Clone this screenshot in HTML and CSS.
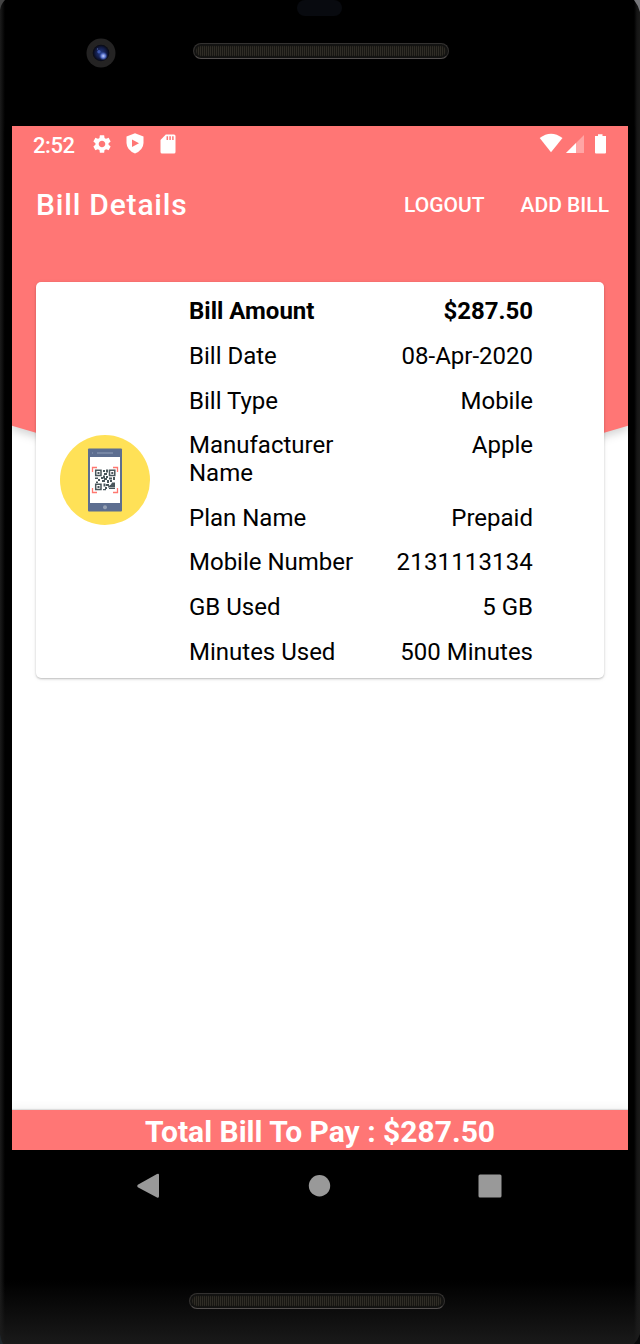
FILE: index.html
```
<!DOCTYPE html>
<html lang="en">
<head>
<meta charset="utf-8">
<title>Bill Details</title>
<link rel="stylesheet" href="styles.css">
</head>
<body>
<div class="phone">
  <svg class="corners" width="640" height="1344" viewBox="0 0 640 1344">
    <path d="M0 0H5Q1 4 0 10Z" fill="#444"/>
    <path d="M634 0H640V12Q638 5 634 0Z" fill="#77777b"/>
    <path d="M0 1334Q1 1340 3 1344H0Z" fill="#20282d"/>
    <path d="M640 1334Q638 1340 634 1344H640Z" fill="#08090a"/>
  </svg>
  <div class="bezel-top">
    <div class="sensor"></div>
    <div class="hardware">
      <svg class="camera" width="30" height="30" viewBox="0 0 30 30">
        <defs>
          <radialGradient id="lens"><stop offset="0" stop-color="#263d87"/><stop offset=".65" stop-color="#121b45"/><stop offset="1" stop-color="#07080f"/></radialGradient>
          <radialGradient id="glint"><stop offset="0" stop-color="#c4d2ff"/><stop offset=".5" stop-color="#5a73cc"/><stop offset="1" stop-color="#263d87" stop-opacity="0"/></radialGradient>
        </defs>
        <circle cx="15" cy="15" r="14.5" fill="#242323"/>
        <circle cx="15" cy="15" r="8.3" fill="url(#lens)"/>
        <circle cx="17.3" cy="18" r="4.5" fill="url(#glint)"/>
        <circle cx="13" cy="13.8" r="1.7" fill="#3e58ae"/>
        <circle cx="11.5" cy="11" r=".7" fill="#4c61a4"/>
      </svg>
      <div class="speaker"></div>
    </div>
  </div>
  <div class="screen">
    <svg class="backdrop" width="616" height="400" viewBox="0 0 616 400">
      <path d="M0 0H616V299.700L308 390L0 299.700Z" fill="#ff7675"/>
    </svg>
    <div class="status">
      <span class="clock">2:52</span>
      <svg class="icon-gear" width="22" height="22" viewBox="0 0 24 24" fill="#fff"><path d="M19.140 12.940c.04-.3.060-.61.060-.94 0-.32-.02-.64-.07-.94l2.030-1.580c.18-.14.23-.41.120-.61l-1.920-3.320c-.12-.22-.37-.29-.59-.22l-2.390.96c-.5-.38-1.030-.7-1.620-.94l-.36-2.540c-.04-.24-.24-.41-.48-.41h-3.840c-.24 0-.43.170-.47.410l-.36 2.540c-.59.240-1.130.570-1.620.940l-2.390-.96c-.22-.08-.47 0-.59.220L2.740 8.870c-.12.210-.08.470.120.610l2.030 1.580c-.05.3-.09.630-.09.940s.02.640.070.940l-2.030 1.580c-.18.140-.23.410-.12.610l1.920 3.320c.12.220.37.290.59.220l2.390-.96c.5.380 1.030.7 1.620.94l.36 2.540c.05.240.24.410.48.410h3.840c.24 0 .44-.17.470-.41l.36-2.540c.59-.24 1.130-.56 1.620-.94l2.390.96c.22.080.47 0 .59-.22l1.920-3.320c.12-.22.070-.47-.12-.61l-2.010-1.580zM12 15.600c-1.980 0-3.600-1.620-3.600-3.600s1.620-3.600 3.600-3.600 3.600 1.620 3.600 3.600-1.620 3.600-3.600 3.600z"/></svg>
      <svg class="icon-shield" width="18" height="21" viewBox="0 0 18 21"><path d="M9 .3L17.500 3.500V10Q17.300 17 9 20.500Q.7 17 .5 10V3.500Z" fill="#fff"/><path d="M6 6.500V14L13 10.200Z" fill="#ff7675"/></svg>
      <svg class="icon-sd" width="16" height="20" viewBox="0 0 16 20"><path d="M5.800.5H14Q15.500.5 15.500 2V18Q15.500 19.500 14 19.500H2Q.5 19.500.5 18V6Z" fill="#fff"/><path d="M7.300 2.300V6M10.100 2.300V6M12.900 2.300V6" stroke="#ff7675" stroke-width="1.500"/></svg>
      <svg class="icon-signal" width="70" height="22" viewBox="0 0 70 22" fill="#fff">
        <path d="M.7 5Q12-3.700 23.500 5L12 19.300Z"/>
        <path d="M45 2V20H27Z" opacity=".35"/>
        <path d="M37 10V20H27Z"/>
        <path d="M59 1.200H63.500V3H67V19.500Q67 20.500 66 20.500H57Q56 20.500 56 19.500V3H59Z"/>
      </svg>
    </div>
    <header class="appbar">
      <h1 class="title">Bill Details</h1>
      <span class="action">LOGOUT</span>
      <span class="action">ADD BILL</span>
    </header>
    <main class="card">
      <svg class="qr" width="90" height="90" viewBox="0 0 90 90">
        <circle cx="45" cy="45" r="45" fill="#ffe157"/>
        <rect x="28" y="13.500" width="34" height="63" rx="1" fill="#5d6e90"/>
        <rect x="30" y="22" width="30" height="46" fill="#fff"/>
        <path d="M37 18H53" stroke="#8190ac" stroke-width="1.500"/><circle cx="32.500" cy="18" r=".7" fill="#8190ac"/>
        <circle cx="45" cy="72.300" r="2" fill="#95a0b4"/>
        <path d="M37 32.500H32.500V37M53 32.500H57.500V37M32.500 53V57.500H37M57.500 53V57.500H53" fill="none" stroke="#ff7770" stroke-width="1.300"/>
        <g fill="none" stroke="#49565b" stroke-width="1.500"><path d="M35.700 35.200H41V40.500H35.700ZM49.500 35.200H54.800V40.500H49.500ZM35.700 49.200H41V54.500H35.700Z"/></g>
        <path fill="#49565b" d="M37.500 37h2v2h-2zM51.300 37h2v2h-2zM37.500 51h2v2h-2zM43 35h2v2h-2zM46 34.500h2v3h-2zM44 38h3v2h-3zM43 40.500h2v3h-2zM46 41h2v2h-2zM35 42.500h3v1.500h-3zM38 44h2v2h-2zM41 42h2v2h-2zM42 45h3v2h-3zM36 46.500h2v1.500h-2zM44 43h3v2h-3zM49 42.500h3v2h-3zM53 42h2v3h-2zM47 45h2v3h-2zM50 45h2v2h-2zM43.500 48.500h2v3h-2zM46 49h3v2h-3zM45 52h2v2h-2zM43 54h3v1.300h-3zM48 51.500l3-2 1-2h3v5h-7zM49 53h6v1h-6z"/>
      </svg>
      <div class="details">
        <div class="row strong"><span class="label">Bill Amount</span><span>$287.50</span></div>
        <div class="row"><span class="label">Bill Date</span><span>08-Apr-2020</span></div>
        <div class="row"><span class="label">Bill Type</span><span>Mobile</span></div>
        <div class="row"><span class="label">Manufacturer Name</span><span>Apple</span></div>
        <div class="row"><span class="label">Plan Name</span><span>Prepaid</span></div>
        <div class="row"><span class="label">Mobile Number</span><span class="number">2131113134</span></div>
        <div class="row"><span class="label">GB Used</span><span>5 GB</span></div>
        <div class="row"><span class="label">Minutes Used</span><span>500 Minutes</span></div>
      </div>
    </main>
    <footer class="total">Total Bill To Pay : $287.50</footer>
  </div>
  <nav class="nav">
    <svg width="640" height="30" viewBox="0 0 640 30" fill="#999">
      <path d="M137.800 14.800L157 4Q159 3 159 5V26Q159 28.500 157 27.500L137.800 17.200Q136.500 16 137.800 14.800Z"/>
      <circle cx="319.500" cy="15.800" r="10.700"/>
      <rect x="478.500" y="4.500" width="23" height="23" rx="1.500"/>
    </svg>
  </nav>
  <div class="bezel-bottom"><div class="speaker"></div></div>
</div>
</body>
</html>
```
FILE: styles.css
```
* { box-sizing: border-box; }
body { margin: 0; background: #000; font-family: Roboto, "Liberation Sans", sans-serif; }
svg { display: block; flex: none; }
.phone {
  position: relative;
  width: 640px;
  height: 1344px;
  overflow: hidden;
  background:
    linear-gradient(to right, #1b1b1b 0, #111 2px, #000 5px, #000 634px, #151515 637px, #1b1b1a 640px);
}
.corners { position: absolute; top: 0; left: 0; }
.bezel-top { height: 126px; }
.sensor { width: 45px; height: 16px; margin: 0 0 0 297px; border-radius: 8px; background: #080a0f; }
.hardware { display: flex; padding: 22px 0 0 86px; }
.speaker {
  width: 256px;
  height: 16px;
  border: 1px solid #333130;
  border-bottom-color: #54504f;
  border-radius: 8px;
  background: repeating-linear-gradient(to right, #302d26 0 1px, #181713 1px 2px);
  box-shadow: inset 0 0 1px 2px #131312;
}
.hardware .speaker { margin: 5px 0 0 76.5px; }
.screen {
  position: relative;
  display: flex;
  flex-direction: column;
  width: 616px;
  height: 1024px;
  margin: 0 12px;
  background: #fff;
  color: #fff;
}
.backdrop { position: absolute; top: 0; left: 0; filter: drop-shadow(0 4px 4px rgba(0, 0, 0, .17)); }
.status, .appbar, .card { position: relative; }
.status { display: flex; height: 38px; padding-left: 21px; }
.clock { width: 57.5px; padding-top: 7px; font-size: 22px; line-height: 26px; font-weight: 500; letter-spacing: -.4px; }
.icon-gear { margin-top: 7px; }
.icon-shield { margin: 7px 0 0 13px; }
.icon-sd { margin: 8px 0 0 16px; }
.icon-signal { margin: 7px 0 0 363px; }
.appbar { display: flex; height: 80px; padding: 0 19px 0 24px; align-items: center; gap: 36px; }
.title { flex: 1; margin: 2px 0 0; font-size: 30px; line-height: 36px; font-weight: 500; letter-spacing: .8px; }
.action { margin-top: 2px; font-size: 21px; line-height: 26px; font-weight: 500; white-space: nowrap; }
.card {
  display: flex;
  width: 568px;
  height: 396px;
  margin: 38px 24px 0;
  padding: 15.4px 71px 0 24px;
  border-radius: 5px;
  background: #fff;
  color: #000;
  box-shadow: 0 1px 2px rgba(0, 0, 0, .22), 0 1px 5px rgba(0, 0, 0, .07);
}
.qr { margin-top: 137.6px; }
.details { flex: 1; margin-left: 39px; display: flex; flex-direction: column; gap: 16.5px; }
.row { display: flex; justify-content: space-between; font-size: 24px; line-height: 28.1px; white-space: nowrap; }
.label { width: 172px; white-space: normal; }
.number { letter-spacing: .15px; }
.strong { font-weight: 700; }
.total {
  height: 40.5px;
  margin-top: auto;
  padding-top: 4px;
  background: #ff7675;
  font-size: 30px;
  line-height: 36px;
  font-weight: 700;
  text-align: center;
  box-shadow: 0 -1px 1px rgba(0, 0, 0, .1), 0 -4px 8px rgba(0, 0, 0, .04);
}
.nav { height: 60px; padding-top: 20px; }
.bezel-bottom {
  height: 134px;
  padding: 83px 0 0 188.5px;
  background: linear-gradient(transparent 70px, rgba(28, 28, 28, .9) 134px);
}
```
